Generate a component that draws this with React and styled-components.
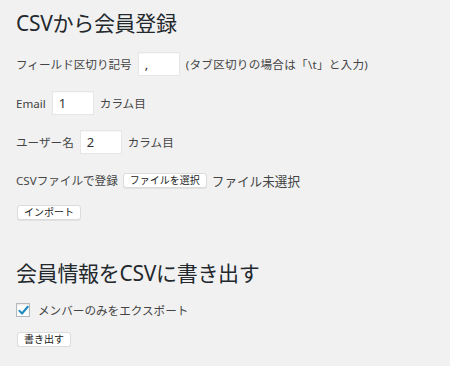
import React from "react";
import styled, { createGlobalStyle } from "styled-components";

const GlobalStyle = createGlobalStyle`
  html, body {
    margin: 0;
    padding: 0;
    background: #f1f1f1;
  }
  body {
    font-family: "Noto Sans", "Noto Sans CJK JP", sans-serif;
    color: #444;
  }
`;

const Page = styled.div`
  padding: 8px 16px 0 16px;
`;

const Title = styled.h2`
  margin: ${(p) => p.$top || 0}px 0 0 0;
  height: 30px;
  line-height: 30px;
  font-size: 21px;
  font-weight: 400;
  color: #23282d;
  letter-spacing: -0.3px;
`;

const Row = styled.div`
  display: flex;
  align-items: center;
  gap: ${(p) => p.$gap || 6}px;
  height: ${(p) => p.$h || 24}px;
  margin-top: ${(p) => p.$top || 15}px;
  font-size: 11.6px;
  white-space: nowrap;
`;

const Label = styled.span`
  font-size: ${(p) => p.$size || 11.6}px;
  letter-spacing: ${(p) => p.$ls || 0}px;
  color: #444;
`;

const TextInput = styled.input`
  box-sizing: border-box;
  width: 42px;
  height: 24px;
  padding: 0 6px;
  border: 1px solid #e6e6e6;
  background: #fff;
  font-family: inherit;
  font-size: 13px;
  color: #333;
  outline: none;
  box-shadow: inset 0 1px 1px rgba(0, 0, 0, 0.03);
`;

const SmallButton = styled.button`
  box-sizing: border-box;
  height: 15px;
  padding: 0 6px;
  border: 1px solid #dcdcdc;
  border-radius: 3px;
  background: #fff;
  font-family: inherit;
  font-size: 10px;
  line-height: 13px;
  color: #222;
  box-shadow: 0 1px 0 rgba(0, 0, 0, 0.06);
  cursor: pointer;
`;

const ButtonRow = styled.div`
  margin-top: ${(p) => p.$top || 13}px;
  padding-left: 1px;
  display: flex;
`;

const CheckBox = styled.span`
  box-sizing: border-box;
  width: 14px;
  height: 14px;
  border: 1px solid #b4b9be;
  background: #fff;
  display: inline-flex;
  align-items: center;
  justify-content: center;
  box-shadow: inset 0 1px 2px rgba(0, 0, 0, 0.1);
`;

const Check = () => (
  <svg width="11" height="11" viewBox="0 0 12 12">
    <path d="M1.6 6.4 L4.4 9.3 L10.6 1.9" fill="none" stroke="#1e8cbe" strokeWidth="2.3" strokeLinecap="round" strokeLinejoin="round" />
  </svg>
);

export default function App() {
  return (
    <>
      <GlobalStyle />
      <Page>
        <Title>CSVから会員登録</Title>
        <Row $top={14}>
          <Label>フィールド区切り記号</Label>
          <TextInput defaultValue="," />
          <Label $ls={0.25}>(タブ区切りの場合は「\t」と入力)</Label>
        </Row>
        <Row>
          <Label>Email</Label>
          <TextInput defaultValue="1" />
          <Label>カラム目</Label>
        </Row>
        <Row>
          <Label>ユーザー名</Label>
          <TextInput defaultValue="2" />
          <Label>カラム目</Label>
        </Row>
        <Row $top={14} $gap={5}>
          <Label>CSVファイルで登録</Label>
          <SmallButton>ファイルを選択</SmallButton>
          <Label $size={12.6}>ファイル未選択</Label>
        </Row>
        <ButtonRow $top={13}>
          <SmallButton>インポート</SmallButton>
        </ButtonRow>
        <Title $top={38}>会員情報をCSVに書き出す</Title>
        <Row $top={15} $h={14} $gap={8}>
          <CheckBox>
            <Check />
          </CheckBox>
          <Label>メンバーのみをエクスポート</Label>
        </Row>
        <ButtonRow $top={15}>
          <SmallButton>書き出す</SmallButton>
        </ButtonRow>
      </Page>
    </>
  );
}
